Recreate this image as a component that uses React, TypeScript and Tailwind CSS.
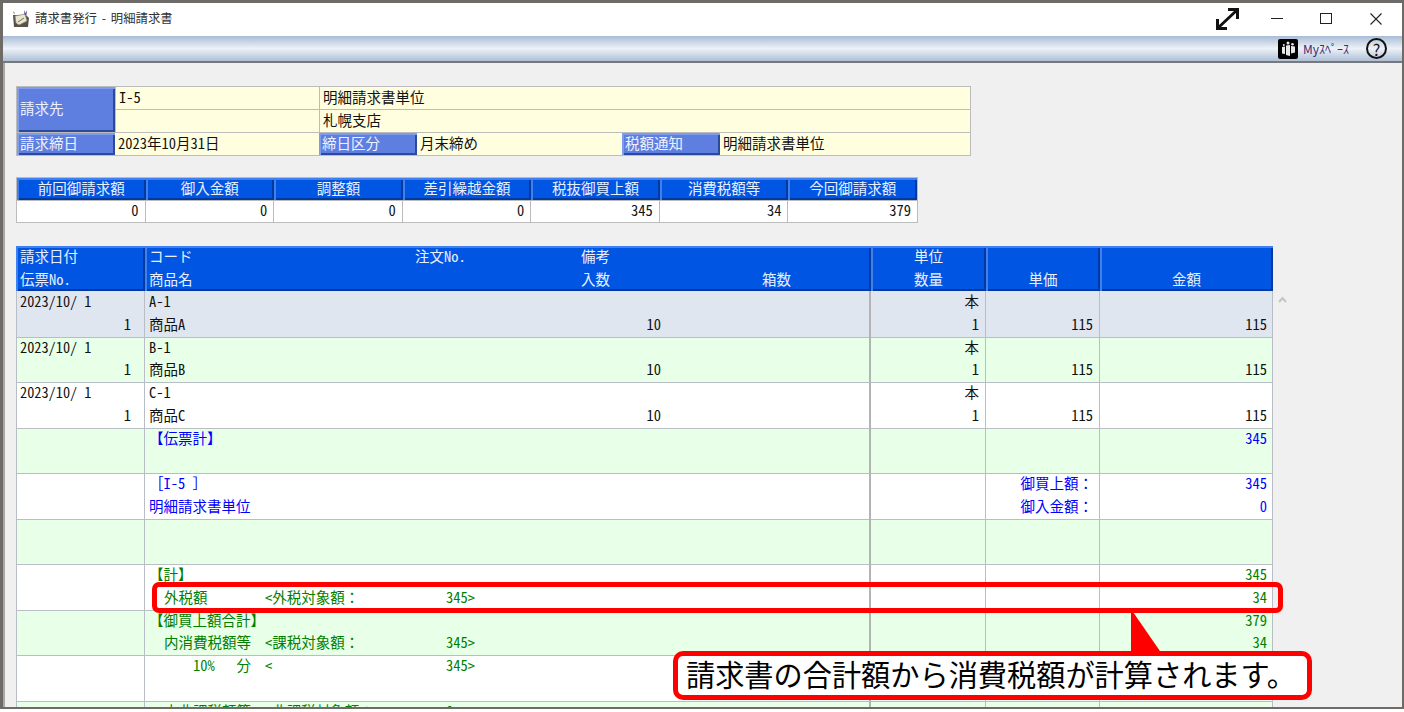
import type { ReactNode } from 'react'

const FONT = "font-['Noto_Sans_CJK_JP','Liberation_Sans',sans-serif] [font-feature-settings:'hwid']"

const bevelBlue = 'bg-[#0055e2] shadow-[inset_2px_2px_0_#3f80ee,inset_-2px_-2px_0_#003a9c] text-[#e8f0ff]'
const bevelLabel = 'bg-[#5f7fe0] shadow-[inset_2px_2px_0_#7f9bec,inset_-2px_-2px_0_#2c4a9c] text-[#eef2ff]'

const summaryHeads = ['前回御請求額', '御入金額', '調整額', '差引繰越金額', '税抜御買上額', '消費税額等', '今回御請求額']
const summaryVals = ['0', '0', '0', '0', '345', '34', '379']

// keeps full-width punctuation full width (hwid would halve it)
function Wide({ children }: { children: ReactNode }) {
  return <span className="[font-feature-settings:normal]">{children}</span>
}

function Label({ children, className = '' }: { children: ReactNode; className?: string }) {
  return <div className={`pl-[3px] pb-[3px] leading-[16px] flex items-center ${bevelLabel} ${className}`}>{children}</div>
}

function Val({ children, className = '' }: { children?: ReactNode; className?: string }) {
  return <div className={`pl-[3px] pb-[3px] leading-[16px] flex items-center bg-[#ffffe0] text-[#111] ${className}`}>{children}</div>
}

// 2-line body of the big table: every cell has two lines of 22.75px
function Cell({ a, b, className = '' }: { a?: ReactNode; b?: ReactNode; className?: string }) {
  return (
    <div className={`h-full border-r border-b border-[#b9bec6] leading-[19px] ${className}`}>
      <div className="h-[22.75px] whitespace-pre">{a}</div>
      <div className="h-[22.75px] whitespace-pre">{b}</div>
    </div>
  )
}

type Pair = [ReactNode?, ReactNode?]

function Row({ bg, c1, c2, c3, c4, c5 }: { bg: string; c1?: Pair; c2?: Pair; c3?: Pair; c4?: Pair; c5?: Pair }) {
  return (
    <div className={`grid grid-cols-[128px_726px_115px_114px_173px] h-[45.5px] border-l border-[#b9bec6] ${bg}`}>
      <Cell a={c1?.[0]} b={c1?.[1]} className="pl-[3px] pr-[5px]" />
      <Cell a={c2?.[0]} b={c2?.[1]} className="pl-[4px] border-r-2 border-r-[#b4b4b4]" />
      <Cell a={c3?.[0]} b={c3?.[1]} className="pr-[6px] text-right" />
      <Cell a={c4?.[0]} b={c4?.[1]} className="pr-[6px] text-right" />
      <Cell a={c5?.[0]} b={c5?.[1]} className="pr-[5px] text-right" />
    </div>
  )
}

function ItemLine({ name, qty }: { name: string; qty: string }) {
  return (
    <div className="flex">
      <span className="w-[432px]">{name}</span>
      <span className="w-[80px] text-right">{qty}</span>
    </div>
  )
}

// tax breakdown line: label / <note / amount>
function TaxLine({ label, note, amt }: { label: string; note: ReactNode; amt: string }) {
  return (
    <div className="grid grid-cols-[15px_101px_181px_60px] text-[#008000]">
      <span />
      <span>{label}</span>
      <span>{note}</span>
      <span>{amt}</span>
    </div>
  )
}

function Blue({ children }: { children: ReactNode }) {
  return <span className="text-[#0000ff]">{children}</span>
}

function Green({ children }: { children: ReactNode }) {
  return <span className="text-[#008000]">{children}</span>
}

function ItemRow({ bg, code, name }: { bg: string; code: string; name: string }) {
  return (
    <Row
      bg={bg}
      c1={[<span className="text-[14.3px]">2023/10/ 1</span>, <div className="text-right pr-[8px]">1</div>]}
      c2={[code, <ItemLine name={name} qty="10" />]}
      c3={['本', '1']}
      c4={[undefined, '115']}
      c5={[undefined, '115']}
    />
  )
}

export default function App() {
  return (
    <div className={`${FONT} relative w-[1404px] h-[712px] overflow-hidden bg-white text-[14.5px] text-[#111]`}>
      <div className="flex flex-col h-[709px] bg-[#f0f0f0] border-t-[3px] border-[#6e6a68] border-l-[3px] border-r-[2px] border-b-[2px]">
        {/* title bar */}
        <div className="h-[33px] shrink-0 bg-white flex items-center pb-[2px]">
          <svg className="ml-[9px] w-[18px] h-[18px]" viewBox="0 0 18 18">
            <path d="M1 5l1 12h14l1-9-3-3z" fill="#56524a" />
            <path d="M3 6l10-2 2 7-8 4-3-2z" fill="#e9e6d2" stroke="#8a8468" strokeWidth=".7" />
            <path d="M6 12l6-4" stroke="#6f6c60" strokeWidth="1" />
            <path d="M12 0l1.5 3L15 0l-.5 5h-2z" fill="#6a4fa0" />
            <path d="M1 1l2 2-1 1z" fill="#8a7a3a" />
          </svg>
          <span className="ml-[5px] text-[12.4px] text-[#333] [font-feature-settings:normal] [word-spacing:2px]">請求書発行 - 明細請求書</span>
          <div className="ml-auto flex items-center">
            <svg className="w-[25px] h-[24px] mr-[31px]" viewBox="0 0 25 24" fill="none" stroke="#111" strokeWidth="3">
              <path d="M4 20L21 4" />
              <path d="M13 2.5h9.5V12" />
              <path d="M2.5 12v9.5H12" />
            </svg>
            <div className="w-[12px] h-[1.5px] bg-[#222] mr-[37px]" />
            <div className="w-[12px] h-[11px] border border-[#222] mr-[38px]" />
            <svg className="w-[12px] h-[12px] mr-[20px]" viewBox="0 0 12 12" stroke="#222" strokeWidth="1.1">
              <path d="M.5.5l11 11M11.5.5l-11 11" />
            </svg>
          </div>
        </div>

        {/* ribbon */}
        <div className="h-[27px] shrink-0 flex items-center justify-end border-b-2 border-[#77797c] bg-gradient-to-b from-[#a9bcd6] via-[#eef2f8] to-[#aebfd6]">
          <div className="w-[20px] h-[20px] rounded-[2px] bg-black flex items-center justify-center">
            <svg className="w-[15px] h-[15px]" viewBox="0 0 15 15" fill="#e8e8e8">
              <path d="M1 6l3-.5V13l-3-.5z" />
              <path d="M5 4.5l4-.5v11l-4-1z" />
              <path d="M10 5l4 .5v6l-4 1z" />
              <circle cx="7" cy="2" r="1.5" />
              <circle cx="11.5" cy="3.2" r="1.3" />
              <circle cx="2.8" cy="4" r="1" />
            </svg>
          </div>
          <span className="ml-[5px] w-[50px] text-[12px] text-[#3b2a6e] [font-feature-settings:normal] whitespace-nowrap">Myｽﾍﾟｰｽ</span>
          <div className="ml-[13px] mr-[15px] w-[21px] h-[21px] rounded-full border-2 border-[#111] flex items-center justify-center text-[16px] leading-none text-[#111] [font-feature-settings:normal]">?</div>
        </div>

        {/* body */}
        <div className="flex-1 min-h-0 overflow-hidden border-l-2 border-[#a8a8a8] pl-[11px] pt-[23px]">
          <div className="w-[955px] h-[70px] grid grid-rows-[45px_22px] border border-[#bcbcbc] bg-[#bcbcbc] gap-y-px">
            <div className="grid grid-cols-[98px_204px_1fr]">
              <Label>請求先</Label>
              <div className="grid grid-rows-[22px_22px] gap-y-px border-l border-[#bcbcbc]">
                <Val>I-5</Val>
                <Val />
              </div>
              <div className="grid grid-rows-[22px_22px] gap-y-px border-l border-[#bcbcbc]">
                <Val>明細請求書単位</Val>
                <Val>札幌支店</Val>
              </div>
            </div>
            <div className="grid grid-cols-[98px_204px_98px_205px_98px_1fr]">
              <Label>請求締日</Label>
              <Val>2023年10月31日</Val>
              <Label>締日区分</Label>
              <Val>月末締め</Val>
              <Label>税額通知</Label>
              <Val>明細請求書単位</Val>
            </div>
          </div>

          <div className="mt-[21px] w-[902px] grid grid-cols-7 border border-[#bcbcbc] bg-white">
            {summaryHeads.map(h => (
              <div key={h} className={`h-[22px] pb-[3px] leading-[16px] flex items-center justify-center ${bevelBlue}`}>{h}</div>
            ))}
            {summaryVals.map((v, i) => (
              <div key={i} className="h-[22px] pb-[3px] leading-[16px] flex items-center justify-end pr-[6px] border-r border-t border-[#bcbcbc] last:border-r-0">{v}</div>
            ))}
          </div>

          <div className="mt-[23px] w-[1257px]">
            {/* grid header */}
            <div className="grid grid-cols-[129px_726px_115px_114px_173px] h-[45px] leading-[19px]">
              <div className={`pl-[4px] ${bevelBlue}`}>
                <div className="h-[22.5px]">請求日付</div>
                <div className="h-[22.5px]">伝票No.</div>
              </div>
              <div className={`pl-[4px] ${bevelBlue}`}>
                <div className="flex h-[22.5px]">
                  <span className="w-[266px]">コード</span>
                  <span className="w-[166px]">注文No.</span>
                  <span>備考</span>
                </div>
                <div className="flex h-[22.5px]">
                  <span className="w-[432px]">商品名</span>
                  <span className="w-[181px]">入数</span>
                  <span>箱数</span>
                </div>
              </div>
              <div className={`text-center ${bevelBlue}`}>
                <div className="h-[22.5px]">単位</div>
                <div className="h-[22.5px]">数量</div>
              </div>
              <div className={`text-center ${bevelBlue}`}>
                <div className="h-[22.5px]">&nbsp;</div>
                <div className="h-[22.5px]">単価</div>
              </div>
              <div className={`text-center ${bevelBlue}`}>
                <div className="h-[22.5px]">&nbsp;</div>
                <div className="h-[22.5px]">金額</div>
              </div>
            </div>

            <ItemRow bg="bg-[#e0e6f0]" code="A-1" name="商品A" />
            <ItemRow bg="bg-[#e8ffe8]" code="B-1" name="商品B" />
            <ItemRow bg="bg-white" code="C-1" name="商品C" />
            <Row bg="bg-[#e8ffe8]" c2={[<Blue>【伝票計】</Blue>]} c5={[<Blue>345</Blue>]} />
            <Row
              bg="bg-white"
              c2={[<Blue><Wide>［</Wide>I-5 <Wide>］</Wide></Blue>, <Blue>明細請求書単位</Blue>]}
              c4={[<Blue>御買上額<Wide>：</Wide></Blue>, <Blue>御入金額<Wide>：</Wide></Blue>]}
              c5={[<Blue>345</Blue>, <Blue>0</Blue>]}
            />
            <Row bg="bg-[#e8ffe8]" />
            <Row
              bg="bg-white"
              c2={[<Green>【計】</Green>, <TaxLine label="外税額" note={<>{'<'}外税対象額<Wide>：</Wide></>} amt="345>" />]}
              c5={[<Green>345</Green>, <Green>34</Green>]}
            />
            <Row
              bg="bg-[#e8ffe8]"
              c2={[<Green>【御買上額合計】</Green>, <TaxLine label="内消費税額等" note={<>{'<'}課税対象額<Wide>：</Wide></>} amt="345>" />]}
              c5={[<Green>379</Green>, <Green>34</Green>]}
            />
            <Row bg="bg-white" c2={[<TaxLine label="    10%   分" note="<" amt="345>" />]} />
            <Row
              bg="bg-[#e8ffe8]"
              c2={[<TaxLine label="内非課税額等" note={<>{'<'}非課税対象額<Wide>：</Wide></>} amt="0>" />]}
            />
          </div>
        </div>
      </div>

      {/* scroll hint */}
      <svg className="absolute left-[1278px] top-[296px] w-[9px] h-[7px]" viewBox="0 0 9 7" fill="none" stroke="#c4c4c4" strokeWidth="2">
        <path d="M1 6l3.5-4L8 6" />
      </svg>

      {/* annotation: highlight + callout */}
      <div className="absolute left-[152px] top-[582px] w-[1131px] h-[31px] rounded-[7px] border-[5px] border-[#ff0000]" />
      <svg className="absolute left-[1130px] top-[612px] w-[34px] h-[42px]" viewBox="0 0 34 42" fill="#ff0000">
        <path d="M1 0h2l29 42H1z" />
      </svg>
      <div className="absolute left-[673px] top-[651px] w-[639px] h-[49px] rounded-[10px] border-[5px] border-[#ff0000] bg-white pl-[8px] pb-[3px] flex items-center text-[29.2px] leading-none text-black whitespace-nowrap [font-feature-settings:normal]">
        請求書の合計額から消費税額が計算されます。
      </div>
    </div>
  )
}
